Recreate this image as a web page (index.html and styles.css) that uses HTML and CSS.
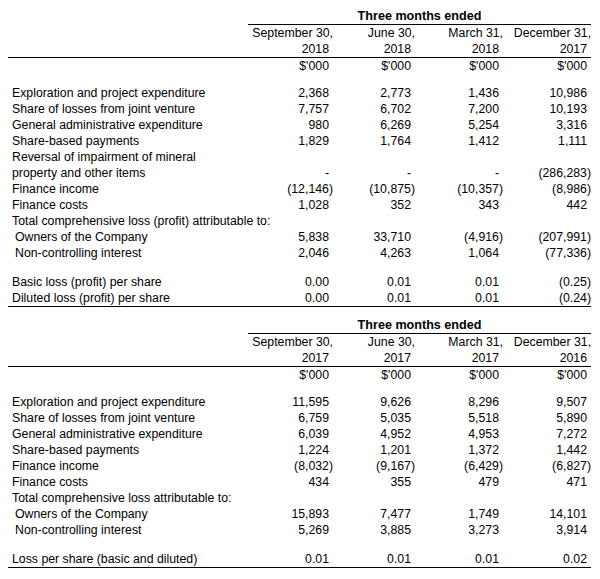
FILE: index.html
```html
<!DOCTYPE html>
<html lang="en">
<head>
<meta charset="utf-8">
<title>Quarterly results</title>
<link rel="stylesheet" href="styles.css">
</head>
<body>
<main class="page">
  <table class="fin">
    <colgroup><col class="c-lbl"><col class="c-1"><col class="c-2"><col class="c-3"><col class="c-4"></colgroup>
    <thead>
      <tr class="hd-period"><th class="blank"></th><th colspan="4" class="period">Three months ended</th></tr>
      <tr><th class="blank"></th><th class="num"><span class="hang">September 30,</span></th><th class="num"><span class="hang">June 30,</span></th><th class="num"><span class="hang">March 31,</span></th><th class="num"><span class="hang">December 31,</span></th></tr>
      <tr class="hd-year"><th class="blank"></th><th class="num">2018</th><th class="num">2018</th><th class="num">2018</th><th class="num">2017</th></tr>
      <tr><th class="blank"></th><th class="num">$'000</th><th class="num">$'000</th><th class="num">$'000</th><th class="num">$'000</th></tr>
    </thead>
    <tbody>
      <tr class="gap-top"><td colspan="5"></td></tr>
      <tr><td class="lbl">Exploration and project expenditure</td><td class="num">2,368</td><td class="num">2,773</td><td class="num">1,436</td><td class="num">10,986</td></tr>
      <tr><td class="lbl">Share of losses from joint venture</td><td class="num">7,757</td><td class="num">6,702</td><td class="num">7,200</td><td class="num">10,193</td></tr>
      <tr><td class="lbl">General administrative expenditure</td><td class="num">980</td><td class="num">6,269</td><td class="num">5,254</td><td class="num">3,316</td></tr>
      <tr><td class="lbl">Share-based payments</td><td class="num">1,829</td><td class="num">1,764</td><td class="num">1,412</td><td class="num">1,111</td></tr>
      <tr><td class="lbl">Reversal of impairment of mineral</td><td></td><td></td><td></td><td></td></tr>
      <tr><td class="lbl">property and other items</td><td class="num">-</td><td class="num">-</td><td class="num">-</td><td class="num"><span class="hang">(286,283)</span></td></tr>
      <tr><td class="lbl">Finance income</td><td class="num"><span class="hang">(12,146)</span></td><td class="num"><span class="hang">(10,875)</span></td><td class="num"><span class="hang">(10,357)</span></td><td class="num"><span class="hang">(8,986)</span></td></tr>
      <tr><td class="lbl">Finance costs</td><td class="num">1,028</td><td class="num">352</td><td class="num">343</td><td class="num">442</td></tr>
      <tr><td class="lbl">Total comprehensive loss (profit) attributable to:</td><td></td><td></td><td></td><td></td></tr>
      <tr><td class="lbl ind">Owners of the Company</td><td class="num">5,838</td><td class="num">33,710</td><td class="num"><span class="hang">(4,916)</span></td><td class="num"><span class="hang">(207,991)</span></td></tr>
      <tr><td class="lbl ind">Non-controlling interest</td><td class="num">2,046</td><td class="num">4,263</td><td class="num">1,064</td><td class="num"><span class="hang">(77,336)</span></td></tr>
      <tr class="gap-mid"><td colspan="5"></td></tr>
      <tr><td class="lbl">Basic loss (profit) per share</td><td class="num">0.00</td><td class="num">0.01</td><td class="num">0.01</td><td class="num"><span class="hang">(0.25)</span></td></tr>
      <tr class="last"><td class="lbl">Diluted loss (profit) per share</td><td class="num">0.00</td><td class="num">0.01</td><td class="num">0.01</td><td class="num"><span class="hang">(0.24)</span></td></tr>
    </tbody>
  </table>

  <table class="fin">
    <colgroup><col class="c-lbl"><col class="c-1"><col class="c-2"><col class="c-3"><col class="c-4"></colgroup>
    <thead>
      <tr class="hd-period"><th class="blank"></th><th colspan="4" class="period">Three months ended</th></tr>
      <tr><th class="blank"></th><th class="num"><span class="hang">September 30,</span></th><th class="num"><span class="hang">June 30,</span></th><th class="num"><span class="hang">March 31,</span></th><th class="num"><span class="hang">December 31,</span></th></tr>
      <tr class="hd-year"><th class="blank"></th><th class="num">2017</th><th class="num">2017</th><th class="num">2017</th><th class="num">2016</th></tr>
      <tr><th class="blank"></th><th class="num">$'000</th><th class="num">$'000</th><th class="num">$'000</th><th class="num">$'000</th></tr>
    </thead>
    <tbody>
      <tr class="gap-top"><td colspan="5"></td></tr>
      <tr><td class="lbl">Exploration and project expenditure</td><td class="num">11,595</td><td class="num">9,626</td><td class="num">8,296</td><td class="num">9,507</td></tr>
      <tr><td class="lbl">Share of losses from joint venture</td><td class="num">6,759</td><td class="num">5,035</td><td class="num">5,518</td><td class="num">5,890</td></tr>
      <tr><td class="lbl">General administrative expenditure</td><td class="num">6,039</td><td class="num">4,952</td><td class="num">4,953</td><td class="num">7,272</td></tr>
      <tr><td class="lbl">Share-based payments</td><td class="num">1,224</td><td class="num">1,201</td><td class="num">1,372</td><td class="num">1,442</td></tr>
      <tr><td class="lbl">Finance income</td><td class="num"><span class="hang">(8,032)</span></td><td class="num"><span class="hang">(9,167)</span></td><td class="num"><span class="hang">(6,429)</span></td><td class="num"><span class="hang">(6,827)</span></td></tr>
      <tr><td class="lbl">Finance costs</td><td class="num">434</td><td class="num">355</td><td class="num">479</td><td class="num">471</td></tr>
      <tr><td class="lbl">Total comprehensive loss attributable to:</td><td></td><td></td><td></td><td></td></tr>
      <tr><td class="lbl ind">Owners of the Company</td><td class="num">15,893</td><td class="num">7,477</td><td class="num">1,749</td><td class="num">14,101</td></tr>
      <tr><td class="lbl ind">Non-controlling interest</td><td class="num">5,269</td><td class="num">3,885</td><td class="num">3,273</td><td class="num">3,914</td></tr>
      <tr class="gap-mid"><td colspan="5"></td></tr>
      <tr class="last"><td class="lbl">Loss per share (basic and diluted)</td><td class="num">0.01</td><td class="num">0.01</td><td class="num">0.01</td><td class="num">0.02</td></tr>
    </tbody>
  </table>
</main>
</body>
</html>
```

FILE: styles.css
```css
html, body {
  margin: 0;
  padding: 0;
  background: #ffffff;
}

.page {
  padding: 8px 0 0 8px;
  display: flex;
  flex-direction: column;
  gap: 10px;
  font-family: "Liberation Sans", Arial, sans-serif;
  font-size: 12.3px;
  color: #000;
}

.fin {
  width: 583px;
  table-layout: fixed;
  border-collapse: separate;
  border-spacing: 0;
  font-size: inherit;
}

.c-lbl { width: 240px; }
.c-1 { width: 85px; }
.c-2 { width: 82px; }
.c-3 { width: 88px; }
.c-4 { width: 88px; }

.fin th,
.fin td {
  padding: 0;
  height: 16px;
  line-height: 16px;
  font-weight: normal;
  white-space: nowrap;
  vertical-align: middle;
}

.fin .period {
  font-weight: bold;
  font-size: 12.6px;
  text-align: center;
  border-bottom: 1px solid #000;
}

.fin .num {
  text-align: right;
  padding-right: 4px;
}

.fin .lbl {
  text-align: left;
  padding-left: 4px;
}

.fin .lbl.ind {
  padding-left: 7px;
}

.hang {
  margin-right: -4px;
}

.hd-year th {
  border-bottom: 1px solid #000;
}

.gap-top td {
  height: 11px;
  line-height: 11px;
}

.gap-mid td {
  height: 13px;
  line-height: 13px;
}

.last td {
  border-bottom: 1px solid #000;
}
```
